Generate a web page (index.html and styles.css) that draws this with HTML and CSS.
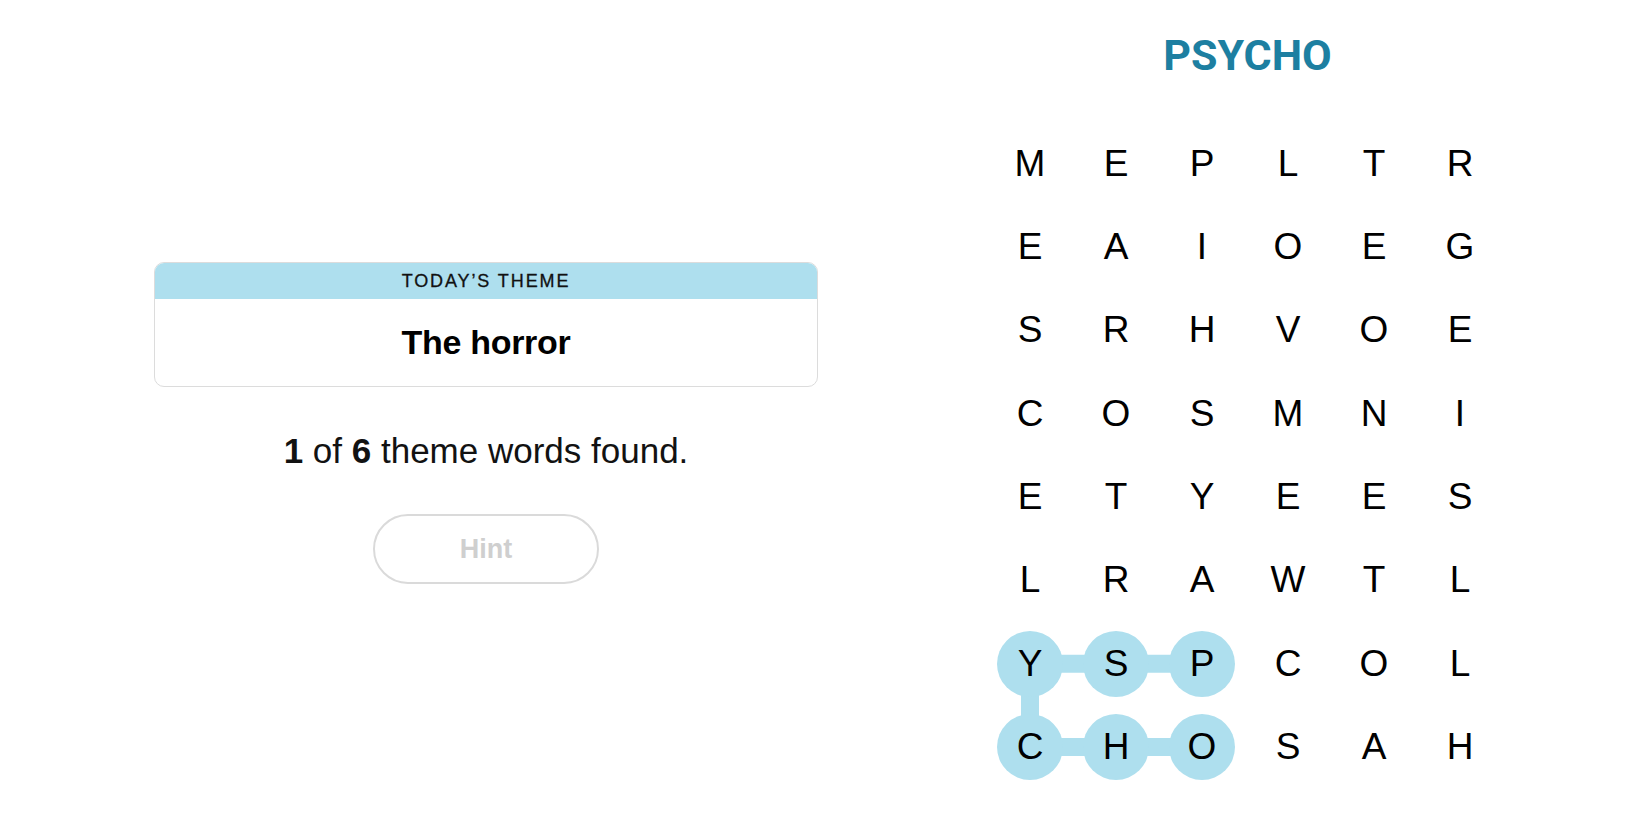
FILE: index.html
```html
<!DOCTYPE html>
<html lang="en">
<head>
<meta charset="utf-8">
<title>Strands</title>
<link rel="stylesheet" href="styles.css">
</head>
<body>
<main class="game">
  <section class="info">
    <div class="theme-card">
      <div class="theme-head">TODAY’S THEME</div>
      <div class="theme-body">The horror</div>
    </div>
    <p class="progress"><b>1</b> of <b>6</b> theme words found.</p>
    <button class="hint" type="button">Hint</button>
  </section>
  <section class="board">
    <h1 class="word">PSYCHO</h1>
    <div class="grid-wrap">
      <svg class="links" width="516" height="667" viewBox="0 0 516 667" aria-hidden="true">
        <g stroke="#aedfee" stroke-width="18" stroke-linecap="butt">
          <line x1="43" y1="541.7" x2="215" y2="541.7"/>
          <line x1="43" y1="541.7" x2="43" y2="625"/>
          <line x1="43" y1="625" x2="215" y2="625"/>
        </g>
      </svg>
      <div class="grid">
        <span class="cell">M</span><span class="cell">E</span><span class="cell">P</span><span class="cell">L</span><span class="cell">T</span><span class="cell">R</span>
        <span class="cell">E</span><span class="cell">A</span><span class="cell">I</span><span class="cell">O</span><span class="cell">E</span><span class="cell">G</span>
        <span class="cell">S</span><span class="cell">R</span><span class="cell">H</span><span class="cell">V</span><span class="cell">O</span><span class="cell">E</span>
        <span class="cell">C</span><span class="cell">O</span><span class="cell">S</span><span class="cell">M</span><span class="cell">N</span><span class="cell">I</span>
        <span class="cell">E</span><span class="cell">T</span><span class="cell">Y</span><span class="cell">E</span><span class="cell">E</span><span class="cell">S</span>
        <span class="cell">L</span><span class="cell">R</span><span class="cell">A</span><span class="cell">W</span><span class="cell">T</span><span class="cell">L</span>
        <span class="cell found">Y</span><span class="cell found">S</span><span class="cell found">P</span><span class="cell">C</span><span class="cell">O</span><span class="cell">L</span>
        <span class="cell found">C</span><span class="cell found">H</span><span class="cell found">O</span><span class="cell">S</span><span class="cell">A</span><span class="cell">H</span>
      </div>
    </div>
  </section>
</main>
</body>
</html>
```
FILE: styles.css
```css
html, body {
  margin: 0;
  padding: 0;
  background: #fff;
}

body {
  font-family: "Liberation Sans", Arial, sans-serif;
  color: #000;
  width: 1650px;
  height: 825px;
  overflow: hidden;
}

.game {
  display: flex;
  align-items: flex-start;
  padding-left: 154px;
  gap: 169px;
}

.info {
  width: 664px;
  padding-top: 262px;
  display: flex;
  flex-direction: column;
  align-items: center;
}

.theme-card {
  width: 664px;
  box-sizing: border-box;
  border: 1px solid #dcdcdc;
  border-radius: 10px;
  overflow: hidden;
}

.theme-head {
  height: 36px;
  line-height: 37px;
  background: #aedfee;
  text-align: center;
  font-size: 18px;
  letter-spacing: 1.9px;
  color: #111;
  -webkit-text-stroke: 0.3px #111;
}

.theme-body {
  height: 87px;
  line-height: 86px;
  text-align: center;
  font-size: 34px;
  font-weight: 700;
  letter-spacing: -0.3px;
}

.progress {
  margin: 44px 0 0;
  height: 40px;
  line-height: 40px;
  font-size: 35px;
  color: #121212;
}

.progress b {
  font-weight: 700;
}

.hint {
  margin-top: 43px;
  width: 226px;
  height: 70px;
  border: 2px solid #dadada;
  border-radius: 35px;
  background: #fff;
  font-family: "Liberation Sans", Arial, sans-serif;
  font-size: 27px;
  font-weight: 700;
  color: #cfcfcf;
  padding: 0;
}

.board {
  width: 516px;
  display: flex;
  flex-direction: column;
  align-items: center;
}

.word {
  margin: 30px 0 0;
  height: 50px;
  line-height: 50px;
  font-family: Roboto, "Liberation Sans", sans-serif;
  font-size: 43px;
  font-weight: 700;
  color: #1d7fa1;
  padding-left: 5px;
}

.grid-wrap {
  position: relative;
  margin-top: 42px;
  width: 516px;
}

.links {
  position: absolute;
  left: 0;
  top: 0;
  z-index: 0;
}

.grid {
  position: relative;
  z-index: 1;
  display: grid;
  grid-template-columns: repeat(6, 86px);
  grid-auto-rows: 83.33px;
}

.cell {
  display: flex;
  align-items: center;
  justify-content: center;
  font-size: 37px;
  color: #000;
}

.cell.found {
  justify-self: center;
  align-self: center;
  width: 66px;
  height: 66px;
  border-radius: 50%;
  background: #aedfee;
}
```
